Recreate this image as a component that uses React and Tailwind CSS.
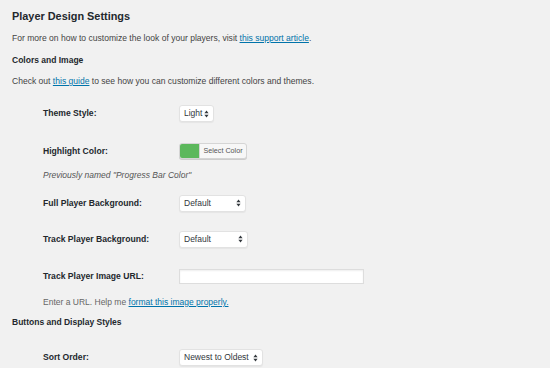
import React from 'react';

const font = { fontFamily: '"Liberation Sans", Arial, sans-serif' };

// Little up/down arrows used on the native-looking selects
const Arrows = () => (
  <svg width="5" height="8" viewBox="0 0 5 8" className="shrink-0">
    <path d="M2.5 0.5 L4.6 3.2 H0.4 Z" fill="#32373c" />
    <path d="M2.5 7.5 L4.6 4.8 H0.4 Z" fill="#32373c" />
  </svg>
);

const Select = ({ value, width }) => (
  <div
    className={`flex items-center justify-between h-[17px] bg-white border border-[#e2e2e2] rounded-[3px] shadow-[0_1px_1px_rgba(0,0,0,0.05)] pl-[4px] pr-[4px] text-[8.5px] text-[#32373c] ${width}`}
  >
    <span>{value}</span>
    <Arrows />
  </div>
);

const Row = ({ label, children, className }) => (
  <div className={`flex items-center pl-[31px] ${className}`}>
    <div className="w-[136px] text-[8.6px] font-bold text-[#23282d]">{label}</div>
    {children}
  </div>
);

export default function App() {
  return (
    <div className="w-[550px] h-[368px] overflow-hidden bg-[#f1f1f1] pt-[8px] px-[12px]" style={font}>
      <h2 className="text-[10.9px] leading-[16px] font-bold text-[#23282d]">Player Design Settings</h2>
      <p className="mt-[8px] text-[8.55px] leading-[12px] text-[#444]">
        For more on how to customize the look of your players, visit{' '}
        <a className="text-[#0073aa] underline">this support article</a>.
      </p>
      <h3 className="mt-[10px] text-[8.5px] leading-[12px] font-bold text-[#23282d]">Colors and Image</h3>
      <p className="mt-[9px] text-[8.55px] leading-[12px] text-[#444]">
        Check out <a className="text-[#0073aa] underline">this guide</a> to see how you can customize different colors and themes.
      </p>

      <Row label="Theme Style:" className="mt-[18px] h-[17px]">
        <Select value="Light" width="w-[35px]" />
      </Row>

      <Row label="Highlight Color:" className="mt-[21px] h-[16px]">
        <div className="flex h-[16px] w-[68px] border border-[#d5d5d5] rounded-[3px] bg-[#f7f7f7] overflow-hidden shadow-[0_1px_0_#ccc]">
          <div className="w-[20px] bg-[#5cb85c] border-r border-[#d5d5d5]" />
          <div className="flex-1 flex items-center justify-center text-[7.2px] text-[#555]">Select Color</div>
        </div>
      </Row>

      <p className="mt-[10px] pl-[31px] text-[8.5px] leading-[12px] italic text-[#555]">
        Previously named "Progress Bar Color"
      </p>

      <Row label="Full Player Background:" className="mt-[14px] h-[16px]">
        <Select value="Default" width="w-[67px]" />
      </Row>

      <Row label="Track Player Background:" className="mt-[20px] h-[16px]">
        <Select value="Default" width="w-[69px]" />
      </Row>

      <Row label="Track Player Image URL:" className="mt-[22px] h-[15px]">
        <div className="h-[15px] w-[185px] bg-white border border-[#ddd] shadow-[inset_0_1px_2px_rgba(0,0,0,0.07)]" />
      </Row>

      <p className="mt-[12px] pl-[31px] text-[8.5px] leading-[12px] text-[#666]">
        Enter a URL. Help me <a className="text-[#0073aa] underline">format this image properly.</a>
      </p>

      <h3 className="mt-[8px] text-[8.5px] leading-[12px] font-bold text-[#23282d]">Buttons and Display Styles</h3>

      <Row label="Sort Order:" className="mt-[21px] h-[17px]">
        <Select value="Newest to Oldest" width="w-[84px]" />
      </Row>
    </div>
  );
}
